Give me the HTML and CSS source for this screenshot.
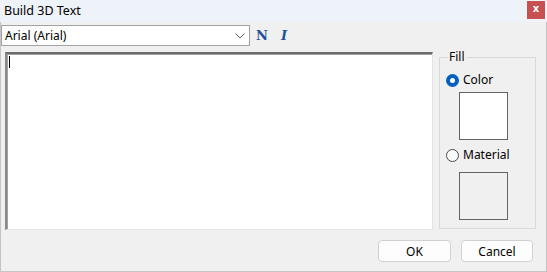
FILE: index.html
```html
<!DOCTYPE html>
<html>
<head>
<meta charset="utf-8">
<link rel="stylesheet" href="styles.css">
</head>
<body>
<div class="window">
  <div class="titlebar">
    <span class="title">Build 3D Text</span>
    <span class="close">x</span>
  </div>
  <div class="toolbar">
    <div class="combo">
      <span class="combo-text">Arial (Arial)</span>
      <svg class="chev" width="10" height="6" viewBox="0 0 10 6"><path d="M0.5 0.5 L5 5 L9.5 0.5" fill="none" stroke="#606060" stroke-width="1"/></svg>
    </div>
    <span class="tool bold">N</span>
    <span class="tool italic">I</span>
  </div>
  <div class="main">
    <div class="textarea"><span class="caret"></span></div>
    <div class="group">
      <span class="legend">Fill</span>
      <div class="radio-row">
        <span class="radio checked"></span><span class="radio-label">Color</span>
      </div>
      <div class="swatch white"></div>
      <div class="radio-row second">
        <span class="radio"></span><span class="radio-label">Material</span>
      </div>
      <div class="swatch grey"></div>
    </div>
  </div>
  <div class="buttons">
    <button class="btn">OK</button>
    <button class="btn">Cancel</button>
  </div>
</div>
</body>
</html>
```
FILE: styles.css
```css
* { box-sizing: border-box; }
html, body { margin: 0; padding: 0; background: #f0f0f0; }
body { font-family: "Noto Sans", "Open Sans", sans-serif; font-size: 12px; color: #000; }
.window {
  width: 547px; height: 272px;
  border: 1px solid #c4c4c4; border-top: none;
  background: #f0f0f0;
  display: flex; flex-direction: column;
}
.titlebar {
  height: 22px; background: #eef2f9;
  display: flex; align-items: flex-start;
  margin: 0 -1px;
  padding-left: 4px;
}
.title { line-height: 22px; font-size: 12.5px; color: #000; }
.close {
  margin-left: auto; margin-right: 2px; margin-top: 1px;
  width: 18px; height: 18px; background: #c75050; color: #fff;
  font-family: "DejaVu Sans", sans-serif; font-weight: bold; font-size: 10px;
  display: flex; align-items: center; justify-content: center; line-height: 1;
  padding-bottom: 2px;
}
.toolbar { margin-top: 3px; height: 21px; display: flex; align-items: center; }
.combo {
  width: 249px; height: 21px; background: #fff; border: 1px solid #a3a3a3;
  display: flex; align-items: center; padding-left: 3px; padding-right: 3px;
}
.combo-text { font-size: 12px; flex: 1; }
.chev { margin-right: 1px; }
.tool { color: #1d4f9c; font-weight: bold; display: inline-block; width: 12px; text-align: center; }
.bold { margin-left: 6px; font-family: "DejaVu Serif", serif; font-size: 13px; font-weight: 900; }
.italic { margin-left: 10px; font-family: "DejaVu Serif", serif; font-style: italic; font-size: 13px; }
.main { display: flex; margin-top: 6px; align-items: flex-start; }
.textarea {
  margin-left: 4px; width: 428px; height: 178px; background: #fff;
  border-style: solid; border-width: 2px 1px 1px 2px;
  border-color: #6b6b6b #e3e3e3 #e3e3e3 #8a8a8a;
  box-shadow: inset 1px 1px 0 #a0a0a0;
  padding: 2px 0 0 2px;
}
.caret { display: block; width: 1px; height: 12px; background: #000; }
.group {
  margin-left: 6px; margin-top: 5px; width: 97px; height: 172px;
  border: 1px solid #d9d9d9; padding-left: 6px;
  display: flex; flex-direction: column; align-items: flex-start;
}
.legend { margin-top: -9px; margin-left: 2px; background: #f0f0f0; padding: 0 1px; line-height: 16px; }
.radio-row { display: flex; align-items: center; margin-top: 8px; height: 14px; }
.radio-row.second { margin-top: 8px; }
.radio {
  width: 13px; height: 13px; border-radius: 50%; border: 1px solid #4a4a4a; background: #fafafa;
}
.radio.checked { background: #fff; border: 4px solid #0060bf; }
.radio-label { margin-left: 4px; line-height: 14px; }
.swatch { width: 49px; height: 48px; border: 1px solid #646464; margin-left: 13px; margin-top: 5px; }
.swatch.white { background: #fff; }
.swatch.grey { background: #f0f0f0; margin-top: 10px; height: 48px; }
.buttons { display: flex; justify-content: flex-end; gap: 10px; margin-top: 10px; padding-right: 13px; }
.btn {
  font-family: inherit; font-size: 12px; color: #000;
  height: 22px; width: 72px; background: #fdfdfd;
  border: 1px solid #d0d0d0; border-radius: 4px; padding: 0;
}
.btn:first-child { width: 73px; }
```
